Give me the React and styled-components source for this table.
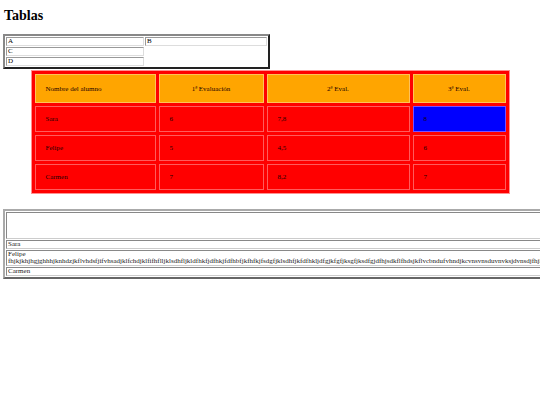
import styled, { createGlobalStyle } from 'styled-components';

const GlobalStyle = createGlobalStyle`
  html, body {
    margin: 0;
    padding: 0;
    background: #fff;
    overflow: hidden;
  }
  body {
    font-family: "Liberation Serif", "Times New Roman", serif;
    color: #000;
  }
`;

const Page = styled.div`
  padding: 8px 3px 0;
`;

const Title = styled.h1`
  font-size: 14px;
  line-height: 16px;
  font-weight: bold;
  margin: 0 0 10px 1px;
`;

// small bordered table at the top
const LetterTable = styled.table`
  width: 267px;
  border: 2px solid;
  border-color: #888 #222 #222 #888;
  border-spacing: 1px;
  font-size: 7px;
  line-height: 7px;

  td {
    padding: 0 1px;
    border: 1px solid;
    border-color: #999 #ddd #ddd #999;
  }
  td:first-child {
    width: 134px;
  }
`;

const GradeTable = styled.table`
  margin: 1px auto 0;
  border: 1px solid #ff9090;
  background: #ff0000;
  border-spacing: 3px;
  font-size: 7px;
  color: #1a0000;
`;

const HeadCell = styled.th`
  box-sizing: border-box;
  height: 29px;
  width: ${p => p.$w}px;
  padding: 0 10px;
  background: #ffa500;
  border: 1px solid #ffc25a;
  font-weight: normal;
  text-align: ${p => (p.$left ? 'left' : 'center')};
`;

const GradeCell = styled.td`
  box-sizing: border-box;
  height: ${p => p.$h}px;
  padding: 0 10px;
  border: 1px solid ${p => (p.$hl ? '#7a50ff' : '#ff5c5c')};
  background: ${p => (p.$hl ? '#0000ff' : 'transparent')};
`;

const ListTable = styled.table`
  margin-top: 15px;
  border: 2px solid;
  border-color: #aaa #666 #666 #aaa;
  border-spacing: 1px;
  font-size: 7px;
  line-height: 7px;
  color: #222;

  td {
    padding: 0 1px;
    border: 1px solid;
    border-color: #888 #ccc #ccc #888;
    white-space: nowrap;
  }
`;

const EmptyCell = styled.td`
  height: 25px;
`;

const grades = [
  { name: 'Sara', marks: ['6', '7,8', '8'], h: 26 },
  { name: 'Felipe', marks: ['5', '4,5', '6'], h: 26 },
  { name: 'Carmen', marks: ['7', '8,2', '7'], h: 26 },
];

const longText =
  'fhjkjkhjhgjghhhjknhdzjkflvhdsfjifvhsadjklfchdjklfifhflljklsdhfljkldfhkfjdfhkjfdfhbfjkfhfkjfsdgfjklsdhfjkfdfhkljdfgjkfgfjksgfjksdfgjdfhjsdkflfhdsjkflvcbndufvhndjkcvnsvnsduvnvksjdvnsdjfhjklfhjkdsfhjkdsfhjk';

export default function App() {
  return (
    <>
      <GlobalStyle />
      <Page>
        <Title>Tablas</Title>

        <LetterTable>
          <tbody>
            <tr>
              <td>A</td>
              <td>B</td>
            </tr>
            <tr>
              <td>C</td>
            </tr>
            <tr>
              <td>D</td>
            </tr>
          </tbody>
        </LetterTable>

        <GradeTable>
          <thead>
            <tr>
              <HeadCell $w={121} $left>Nombre del alumno</HeadCell>
              <HeadCell $w={105}>1ª Evaluación</HeadCell>
              <HeadCell $w={143}>2ª Eval.</HeadCell>
              <HeadCell $w={93}>3ª Eval.</HeadCell>
            </tr>
          </thead>
          <tbody>
            {grades.map((row, i) => (
              <tr key={row.name}>
                <GradeCell $h={row.h}>{row.name}</GradeCell>
                {row.marks.map((m, j) => (
                  <GradeCell key={j} $h={row.h} $hl={i === 0 && j === 2}>
                    {m}
                  </GradeCell>
                ))}
              </tr>
            ))}
          </tbody>
        </GradeTable>

        <ListTable>
          <tbody>
            <tr>
              <EmptyCell />
            </tr>
            <tr>
              <td>Sara</td>
            </tr>
            <tr>
              <td>
                Felipe
                <br />
                {longText}
              </td>
            </tr>
            <tr>
              <td>Carmen</td>
            </tr>
          </tbody>
        </ListTable>
      </Page>
    </>
  );
}
